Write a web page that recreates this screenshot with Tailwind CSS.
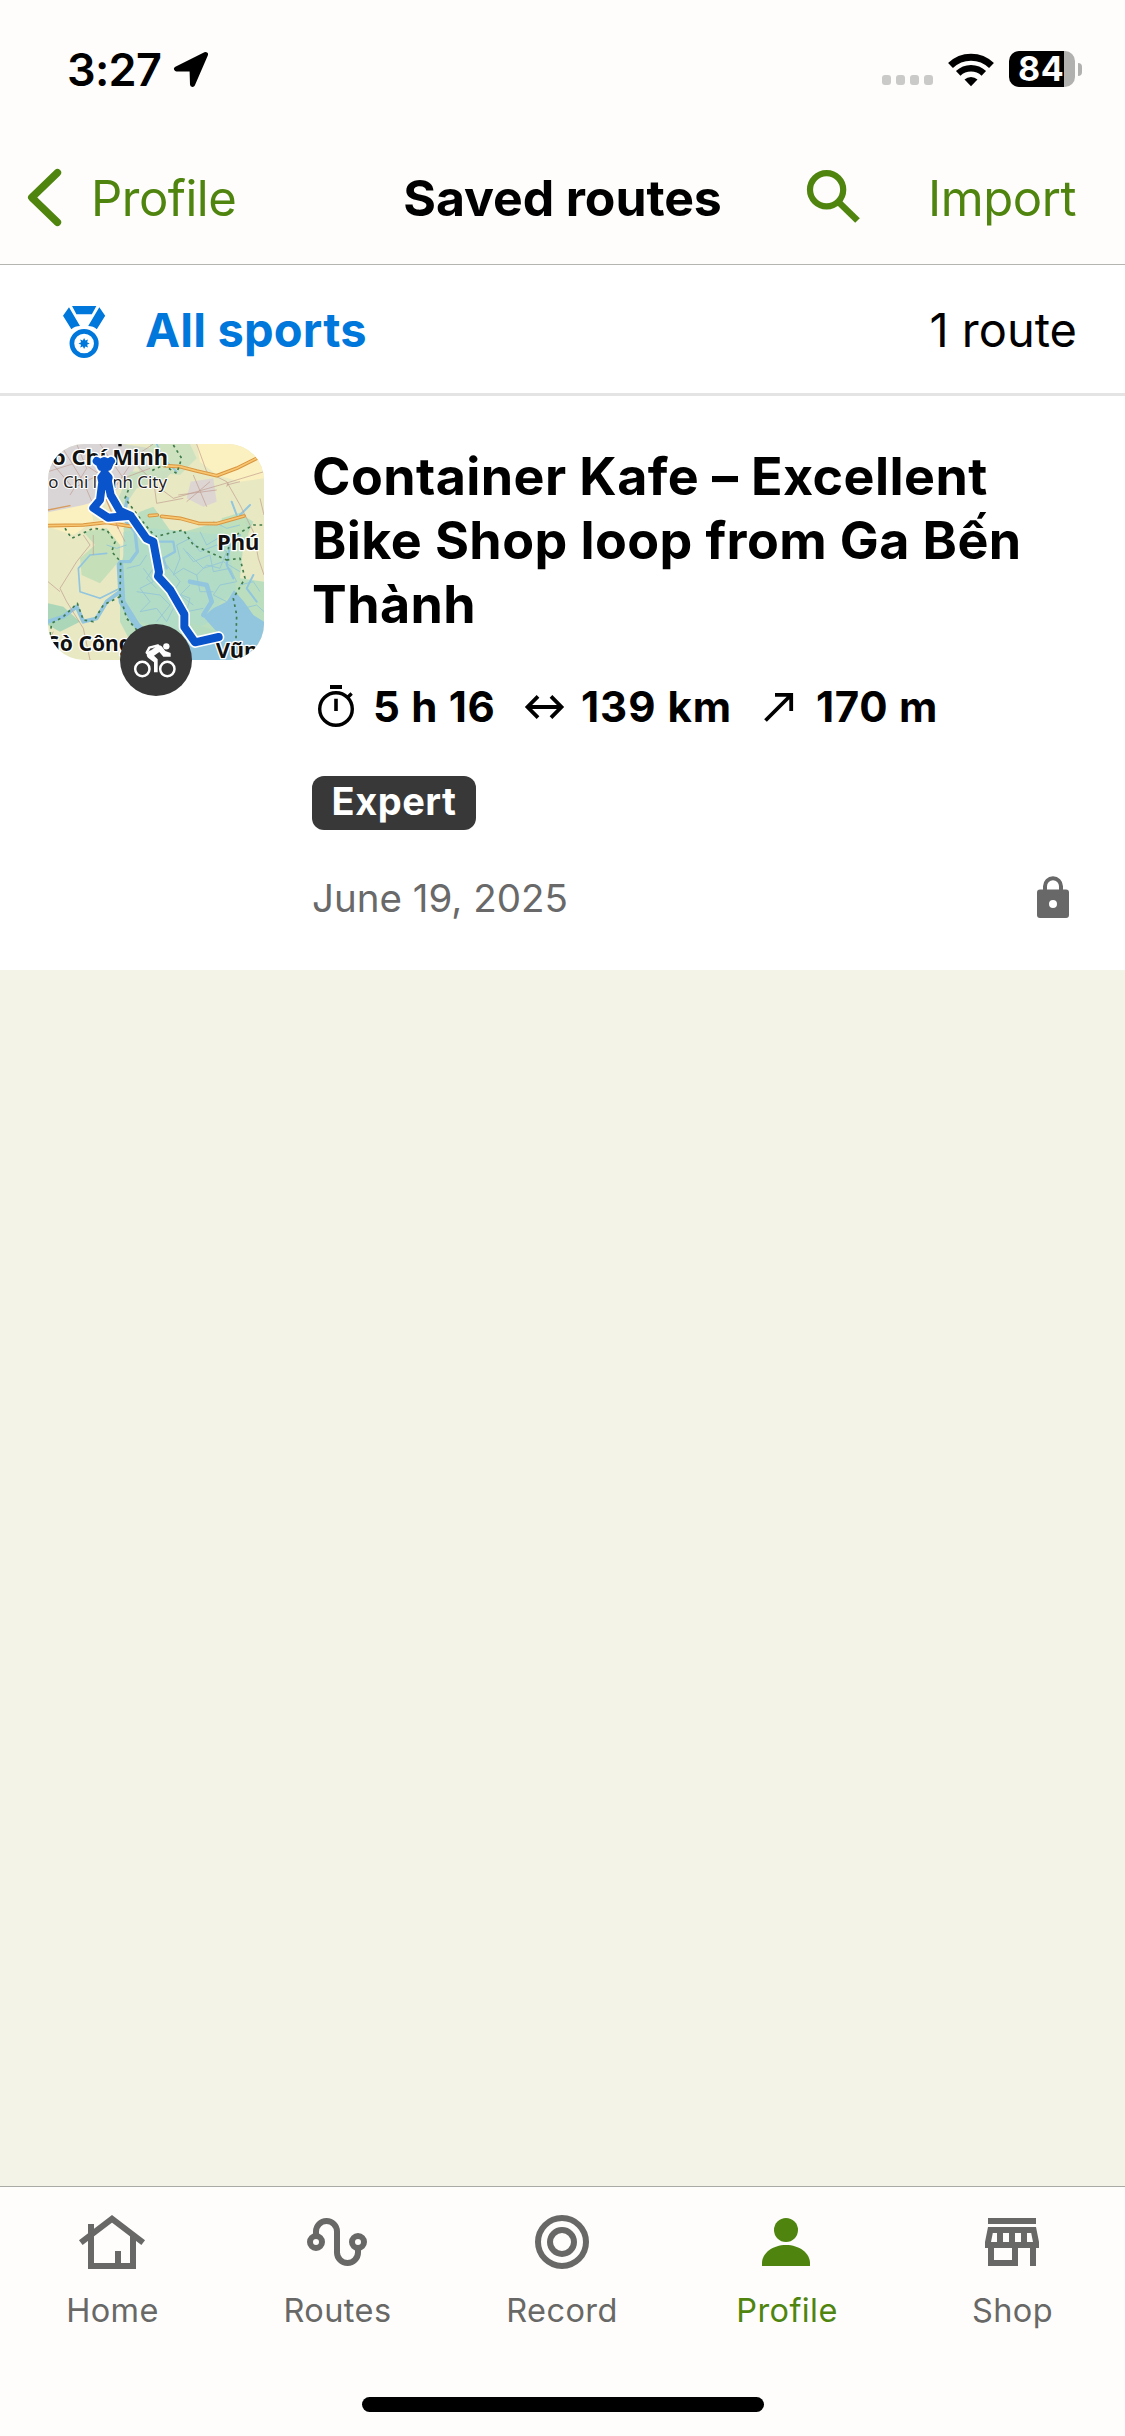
<!DOCTYPE html>
<html lang="en">
<head>
<meta charset="utf-8">
<title>Saved routes</title>
<script src="https://cdn.jsdelivr.net/npm/@tailwindcss/browser@4"></script>
</head>
<body class="bg-[#f4f3e7]">
<div class="flex h-[2436px] w-[1125px] flex-col overflow-hidden bg-[#f4f3e7] font-['Inter',sans-serif] text-black">

  <header class="border-b border-[#b4b4b1] bg-[#fefdfb]">
    <!-- Status bar -->
    <div class="flex h-[134px] items-center pt-1 pl-[67px] pr-[43px]">
      <span class="text-[45px] leading-none font-semibold tracking-[-0.700px]">3:27</span>
      <svg class="ml-[11px] h-[38px] w-[38px]" viewBox="172 50 38 38"><path d="M205.500 54.500L176.500 69L192 69L192.500 84.500Z" fill="#000" stroke="#000" stroke-width="5" stroke-linejoin="round"/></svg>
      <div class="ml-auto flex items-center">
        <div class="mt-[22px] flex gap-[4.600px]">
          <i class="size-[9.400px] rounded-[3px] bg-[#cacac9]"></i><i class="size-[9.400px] rounded-[3px] bg-[#cacac9]"></i><i class="size-[9.400px] rounded-[3px] bg-[#cacac9]"></i><i class="size-[9.400px] rounded-[3px] bg-[#cacac9]"></i>
        </div>
        <svg class="ml-[13px] h-[36px] w-[50px]" viewBox="946 50 50 36">
          <path d="M950.500 64.500A29.500 29.500 0 0 1 991.500 64.500" fill="none" stroke="#000" stroke-width="7"/>
          <path d="M958.200 72.300A18.600 18.600 0 0 1 983.800 72.300" fill="none" stroke="#000" stroke-width="6.500"/>
          <path d="M964.500 78.500A9.600 9.600 0 0 1 977.500 78.500L971 85.200Z"/>
        </svg>
        <div class="ml-[13px] flex h-[36px] w-[66px] items-center rounded-[10px] bg-[linear-gradient(90deg,#000_55px,#b1b1b0_55px)] pl-[9px]">
          <span class="text-[34px] leading-[36px] font-bold tracking-[0.500px] text-white">84</span>
        </div>
        <i class="ml-[3px] h-[13px] w-[4px] rounded-r-full bg-[#b1b1b0]"></i>
      </div>
    </div>
    <!-- Navigation bar -->
    <div class="grid h-[130px] grid-cols-[1fr_auto_1fr] items-center pb-[2px] text-[49px] leading-none text-[#4f850f]">
      <div class="flex items-center pl-6">
        <svg class="h-[64px] w-[42px]" viewBox="24 166 42 64"><path d="M57.400 172.700L31.800 197.500L57.400 222.300" fill="none" stroke="currentColor" stroke-width="7.500" stroke-linecap="round" stroke-linejoin="round"/></svg>
        <span class="ml-[25px] tracking-[-0.500px]">Profile</span>
      </div>
      <h1 class="text-[50px] font-bold tracking-[-0.100px] text-black">Saved routes</h1>
      <div class="flex items-center justify-end pr-[49px]">
        <svg class="mr-[65px] mb-[5px] h-[60px] w-[60px]" viewBox="803 166 60 60" fill="none" stroke="currentColor"><circle cx="826.600" cy="189.700" r="16.600" stroke-width="6.200"/><path d="M838.500 202L857.500 220.500" stroke-width="6.600"/></svg>
        <span class="tracking-[-0.450px]">Import</span>
      </div>
    </div>
  </header>

  <!-- Sport filter -->
  <div class="flex h-[131px] items-center border-b-[3px] border-[#e4e4e4] bg-white pl-[60px] pr-[48px] pt-px text-[47px] leading-none">
    <svg class="mt-[3px] h-[56px] w-[48px] text-[#0077db]" viewBox="60 303 48 56" fill="currentColor">
      <path d="M72 306H96.400L91.800 314.300H76.400Z"/>
      <path d="M69 307.300L63 315.700L71.400 329.300Q75 326 80 326Z"/>
      <path d="M99.300 307.300L105.200 315.700L96.800 329.300Q93.200 326 88.200 326Z"/>
      <circle cx="84.100" cy="343.500" r="12.200" fill="none" stroke="currentColor" stroke-width="4.700"/>
      <path d="M84.100 337.900L85.400 340.500L88 339.500L87.100 342.200L89.700 343.500L87.100 344.800L88 347.500L85.400 346.500L84.100 349.100L82.800 346.500L80.200 347.500L81.100 344.800L78.500 343.500L81.100 342.200L80.200 339.500L82.800 340.500Z"/>
    </svg>
    <span class="ml-[37px] font-bold tracking-[0.200px] text-[#0077db]">All sports</span>
    <span class="ml-auto">1 route</span>
  </div>

  <!-- Route card -->
  <article class="flex h-[574px] bg-white pt-12 pl-12 pr-[49px]">
    <div class="relative size-[216px]">
      <svg class="size-[216px] rounded-[36px]" viewBox="24 27 648 648" fill="none" stroke-linejoin="round">
        <rect x="24" y="27" width="648" height="648" fill="#e8e8c2"/>
        <!-- land cover -->
        <path d="M470 27H672V130L600 140L530 120L480 80Z" fill="#fbf0bf"/>
        <path d="M24 215Q100 190 150 200L160 260L100 300L24 275Z" fill="#fbf0bf"/>
        <path d="M150 260L270 240L330 300L250 330L170 310Z" fill="#f6ecc0"/>
        <path d="M24 27H250L300 60L270 130L200 190L130 210L24 232Z" fill="#d9d5d6"/>
        <path d="M250 27L330 40L400 27L430 80L380 120L300 110Z" fill="#d3d9c8"/>
        <path d="M452 140L520 130L530 200L490 215L440 190Z" fill="#dcd5d2"/>
        <path d="M330 27L450 27L470 70L420 120L330 110Z" fill="#cfe2c0"/>
        <path d="M270 110L400 105L380 130L290 160L250 220L235 190Z" fill="#c9dfc0"/>
        <path d="M130 290L200 280L240 330L240 375L180 445L125 420L120 370L165 330Z" fill="#c5dfb8"/>
        <path d="M300 230L340 215L400 300L520 265L600 235L640 260L610 330L600 430L672 440V560L610 600L590 675H300L240 560V480L245 380L260 330L250 280Z" fill="#bbdfbe"/>
        <path d="M250 290L330 280L560 300L590 470L540 500L510 560L430 600L300 560L250 500Z" fill="#b3dcc6"/>
        <path d="M24 505L70 515L120 560L60 590L24 570Z" fill="#abd7b8"/>
        <path d="M545 250L610 230L625 300L590 330L550 290Z" fill="#bfe0bb"/>
        <!-- water -->
        <path d="M582 466L612 500L640 540L672 560V675H440L420 620L470 590L530 590L490 545L520 520L560 500Z" fill="#92c5de"/>
        <path d="M440 560L545 592L520 620L470 625Z" fill="#b5dcbf"/>
        <g stroke="#92c5de" stroke-linecap="round">
          <path d="M240 390L246 500L290 570L350 630L440 650" stroke-width="20"/>
          <path d="M240 470L200 500L170 550L130 560L110 515L70 545L24 560" stroke-width="12"/>
          <path d="M262 190L250 250L285 290L292 350L270 380L240 380" stroke-width="10"/>
          <path d="M450 440L500 450L515 500L490 540" stroke-width="14"/>
          <path d="M350 320L400 320L405 350L370 370L380 400" stroke-width="7"/>
          <path d="M240 460L180 490L120 470L115 400L150 360L200 355" stroke-width="5"/>
          <path d="M590 240L575 200M600 300L570 330L560 390L580 430M640 420L620 460L650 500M630 210L600 240" stroke-width="6"/>
          <path d="M350 27L370 70L410 110" stroke-width="5"/>
        </g>
        <g stroke="#93c6d9" stroke-width="3" opacity=".85">
          <path d="M410 330L450 310L480 350L530 330L560 350L540 400L500 390L470 420L430 400L400 420L420 370Z"/>
          <path d="M430 340L460 380L510 360L520 410L570 400L590 440L540 450L520 480L560 500"/>
          <path d="M380 390L420 440L400 470L450 490L440 530L490 520M470 420L480 470L520 470"/>
          <path d="M310 400L340 440L300 460L330 500L300 530L350 520L380 560L400 520M320 360L300 390L260 400"/>
          <path d="M480 290L500 330L550 300L580 350M440 350L490 400L550 380L600 410M450 450L420 480L460 510M290 470L360 480L390 510L350 560M340 400L320 430L350 460M520 260L560 280L600 270"/>
          <path d="M260 330L230 340L200 330M600 450L640 440L660 470M610 520L650 510L672 530"/>
        </g>
        <!-- minor roads -->
        <g stroke="#c09c90" stroke-width="2">
          <path d="M24 110L120 80L230 150L290 60L340 27M60 27L130 140L160 210M24 70L100 160L230 90M180 27L250 130L330 100M110 27L140 100L90 180"/>
          <path d="M270 60L300 100L360 160L400 190L540 150L672 110M340 130L350 205L430 190M470 27L500 110L560 140L600 210L640 290L655 370L672 420M460 120L500 215M415 180L530 165M440 200L510 140M560 150L600 140M560 155L565 145"/>
          <path d="M130 300L150 330L110 380L60 460L80 500L130 580L150 675M160 300L160 360M230 270L255 320M40 590L24 620M660 190L672 240M24 440L60 470"/>
        </g>
        <!-- main roads -->
        <g stroke-linecap="round">
          <path d="M24 225L90 212" stroke="#d79b5c" stroke-width="4"/>
          <path d="M24 272L130 270L200 262L272 274M365 244L420 250L475 265L530 266L612 243M328 242L352 240M372 92L420 95L470 108L530 122L590 100L650 70" stroke="#d9953f" stroke-width="11"/>
          <path d="M24 272L130 270L200 262L272 274M365 244L420 250L475 265L530 266L612 243M328 242L352 240M372 92L420 95L470 108L530 122L590 100L650 70" stroke="#f8c671" stroke-width="5"/>
          <path d="M180 150L210 220L235 280" stroke="#d9a070" stroke-width="4"/>
        </g>
        <!-- administrative borders -->
        <g stroke="#3e7a4a" stroke-width="5" stroke-dasharray="8 11">
          <path d="M400 30L425 70L410 115L370 90L330 110M265 165L255 190L300 250L345 305L430 285L460 330L560 375L570 310L640 270L672 270"/>
          <path d="M75 280L95 310L160 280L200 285L225 320L215 350L242 380L240 480L260 550L295 590"/>
          <path d="M240 485L190 510L160 560L130 555L112 505L70 545L35 565L30 600"/>
          <path d="M560 375L600 370L615 430L580 490L590 540L588 610"/>
        </g>
        <!-- place labels -->
        <clipPath id="labelArea"><path d="M24 27H672V560H651V675H33V560H24Z"/></clipPath>
        <g clip-path="url(#labelArea)" fill="#111" stroke="#fff" stroke-width="8" paint-order="stroke" font-family="'Noto Sans',sans-serif">
          <text x="36" y="91" font-size="64" font-weight="700" textLength="348" lengthAdjust="spacingAndGlyphs">o Chí Minh</text>
          <text x="25" y="158" font-size="49" textLength="356" lengthAdjust="spacingAndGlyphs" fill="#222" stroke-width="6">o Chi Minh City</text>
          <text x="531" y="345" font-size="66" font-weight="700" textLength="127" lengthAdjust="spacingAndGlyphs">Phú</text>
          <text x="14" y="649" font-size="66" font-weight="700" textLength="262" lengthAdjust="spacingAndGlyphs">Gò Công</text>
          <text x="527" y="668" font-size="66" font-weight="700">Vũng</text>
        </g>
        <path d="M240 27V34" stroke="#111" stroke-width="10"/>
        <!-- route track -->
        <g stroke-linecap="round">
          <path d="M170 78L180 84L192 78L206 84L213 78M180 86L184 96H204L209 84M193 96L194 112M184 128L194 114L206 128L200 150L187 142ZM187 140L180 195L160 219L204 248L272 242L320 311L340 320L357 411L354 424L391 465L433 538V576L465 622L536 606M204 140L212 180L240 228L272 242" stroke="#fff" stroke-width="34"/>
          <path d="M170 78L180 84L192 78L206 84L213 78M180 86L184 96H204L209 84M193 96L194 112M184 128L194 114L206 128L200 150L187 142ZM187 140L180 195L160 219L204 248L272 242L320 311L340 320L357 411L354 424L391 465L433 538V576L465 622L536 606M204 140L212 180L240 228L272 242" stroke="#0a54cb" stroke-width="24"/>
        </g>
      </svg>
      <div class="absolute top-[180px] left-[72px] size-[72px] rounded-full bg-[#383838]">
        <svg class="size-[72px]" viewBox="0 0 216 216" fill="none" stroke="#fff">
          <circle cx="67" cy="135" r="21.500" stroke-width="7.500"/><circle cx="142" cy="135" r="21.500" stroke-width="7.500"/>
          <circle cx="139" cy="67" r="9.500" fill="#fff" stroke="none"/>
          <path d="M114 64L88 71L80 86" stroke-width="7" stroke-linejoin="round" stroke-linecap="round"/>
          <path d="M80 92Q79 86 86 82L112 65Q119 61 125 67L136 81L152 87V98H130L118 84L102 95L113 106V145H102V115L84 101Q80 97 80 92Z" fill="#fff" stroke="none"/>
          <path d="M94 76L103 72L90 81Z" fill="#383838" stroke="none"/>
        </svg>
      </div>
    </div>

    <div class="ml-12 flex flex-1 flex-col pt-px">
      <h2 class="text-[52px] leading-[64px] font-bold tracking-[0.420px] whitespace-nowrap">Container Kafe – Excellent<br>Bike Shop loop from Ga Bến<br>Thành</h2>
      <div class="mt-12 flex h-11 items-center text-[42px] leading-none font-bold tracking-[0.700px] whitespace-nowrap">
        <div class="flex w-[208px] items-center">
          <svg class="size-12" viewBox="312 683 48 48"><circle cx="336" cy="709" r="16.300" fill="none" stroke="#000" stroke-width="3.400"/><path d="M330 685H342V689H330ZM334.200 698.700H337.800V711H334.200ZM346 696.500L350.500 692.300L352.800 694.800L348.500 699Z"/></svg>
          <span class="ml-[13px]">5 h 16</span>
        </div>
        <div class="flex w-[236px] items-center">
          <svg class="size-12" viewBox="520 683 48 48" fill="none" stroke="#000" stroke-width="3.800"><path d="M527 707H562M538 696.300L527.500 707L538 717.700M551 696.300L561.500 707L551 717.700"/></svg>
          <span class="ml-[13px] tracking-[1px]">139 km</span>
        </div>
        <div class="flex items-center">
          <svg class="size-12" viewBox="756 683 48 48" fill="none" stroke="#000" stroke-width="3.800"><path d="M765.500 720.500L791 695M775 694.800H791.200V711"/></svg>
          <span class="ml-[12px]">170 m</span>
        </div>
      </div>
      <div class="mt-[47px] flex h-[54px] w-[164px] items-center justify-center rounded-[12px] bg-[#383838] pb-[4px] text-[38px] leading-none font-bold tracking-[0.500px] text-white">Expert</div>
      <div class="mt-[46px] flex h-11 items-center justify-between text-[38.500px] leading-none text-[#696969]">
        <span>June 19, 2025</span>
        <svg class="mr-[2px] mb-[3px] h-[48px] w-[42px]" viewBox="1032 873 42 48"><path d="M1045 891V886.300A8 8 0 0 1 1061 886.300V891" fill="none" stroke="#686868" stroke-width="4"/><path fill="#686868" fill-rule="evenodd" d="M1040 889.500H1066Q1069 889.500 1069 892.500V915Q1069 918 1066 918H1040Q1037 918 1037 915V892.500Q1037 889.500 1040 889.500ZM1053 899.900A4 4 0 1 0 1053 907.900A4 4 0 1 0 1053 899.900Z"/></svg>
      </div>
    </div>
  </article>

  <!-- Tab bar -->
  <nav class="mt-auto flex h-[250px] flex-col border-t border-[#aaaaa5] bg-[#fefdfb]">
    <div class="grid h-[210px] grid-cols-5 pt-[19px] text-[32.500px] leading-none tracking-[0.400px] text-[#686866]">
      <div class="flex flex-col items-center">
        <svg class="mr-px size-[72px]" viewBox="0 0 24 24" fill="none" stroke="currentColor" stroke-width="2"><path d="M1.600 12.200L12 4.270L22.400 12.200M5 6V20H19V9.500M14 20V15"/></svg>
        <span class="mt-[17px]">Home</span>
      </div>
      <div class="flex flex-col items-center">
        <svg class="mr-px size-[72px]" viewBox="0 0 24 24" fill="none" stroke="currentColor" stroke-width="2"><circle cx="5" cy="12" r="2"/><circle cx="19" cy="12" r="2"/><path d="M5 10V8.500A3.500 3.500 0 0 1 12 8.500V15.500A3.500 3.500 0 0 0 19 15.500V14"/></svg>
        <span class="mt-[17px]">Routes</span>
      </div>
      <div class="flex flex-col items-center">
        <svg class="mr-px size-[72px]" viewBox="0 0 24 24" fill="none" stroke="currentColor" stroke-width="2"><circle cx="12" cy="12" r="8"/><circle cx="12" cy="12" r="4"/></svg>
        <span class="mt-[17px] mr-px">Record</span>
      </div>
      <div class="flex flex-col items-center text-[#4f850f]">
        <svg class="mr-[3px] size-[72px]" viewBox="0 0 24 24" fill="currentColor"><circle cx="12" cy="8" r="4"/><path d="M4 20V19C4 15.700 7.600 13 12 13S20 15.700 20 19V20Z"/></svg>
        <span class="mt-[17px] mr-px">Profile</span>
      </div>
      <div class="flex flex-col items-center">
        <svg class="mr-px size-[72px]" viewBox="0 0 24 24" fill="currentColor" fill-rule="evenodd"><path d="M4 4H20V6H4ZM4 7H20L21 12V14H20V20H18V14H14V20H4V14H3V12ZM5.600 9L5 12H7V9ZM9 9V12H11V9ZM13 9V12H15V9ZM17 9V12H19L18.400 9ZM6 14V18H12V14Z"/></svg>
        <span class="mt-[17px]">Shop</span>
      </div>
    </div>
    <div class="mx-auto h-[15px] w-[402px] rounded-full bg-black"></div>
  </nav>
</div>
</body>
</html>
